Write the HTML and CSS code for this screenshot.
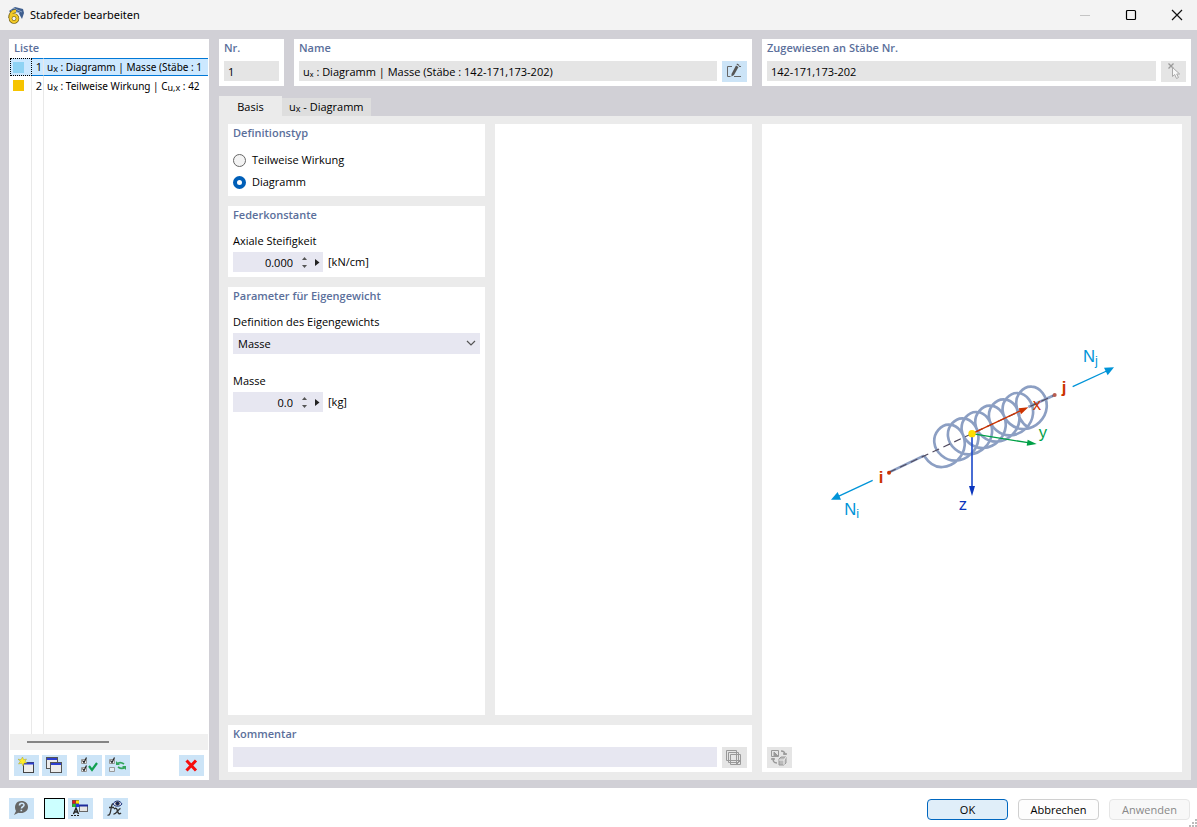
FILE: index.html
```html
<!DOCTYPE html>
<html lang="de">
<head>
<meta charset="utf-8">
<title>Stabfeder bearbeiten</title>
<link rel="stylesheet" href="styles.css">
</head>
<body>
<div class="dialog">
  <header class="titlebar">
    <svg class="app-icon" width="18" height="18" viewBox="0 0 18 18" aria-hidden="true">
      <path d="M2 5 8 1l8 2 1 4-2 6-4-7-7 1z" fill="#3f5f8f"/>
      <path d="M4 4l9 3M6 2l9 4" stroke="#8ea5c6" stroke-width="1"/>
      <path d="M9 5C5 5 3 8 3 12" fill="none" stroke="#6b5a10" stroke-width="3.500"/>
      <circle cx="7" cy="12.500" r="3.500" fill="none" stroke="#6b5a10" stroke-width="3.500"/>
      <path d="M9 5C5 5 3 8 3.500 12" fill="none" stroke="#f2c928" stroke-width="2.300"/>
      <circle cx="7" cy="12.500" r="3.500" fill="none" stroke="#f2c928" stroke-width="2.300"/>
    </svg>
    <h1 class="title">Stabfeder bearbeiten</h1>
    <div class="window-buttons">
      <button class="win-btn" aria-label="Minimieren" disabled><svg width="12" height="12" viewBox="0 0 12 12"><path d="M1 6.500h10" stroke="#c4c4c4"/></svg></button>
      <button class="win-btn" aria-label="Maximieren"><svg width="12" height="12" viewBox="0 0 12 12"><rect x="1.500" y="1.500" width="9" height="9" rx="1" fill="none" stroke="#000" stroke-width="1.200"/></svg></button>
      <button class="win-btn" aria-label="Schließen"><svg width="12" height="12" viewBox="0 0 12 12"><path d="M1 1l10 10M11 1 1 11" stroke="#111" stroke-width="1.200"/></svg></button>
    </div>
  </header>

  <main class="workspace">
    <section class="list-panel">
      <h2 class="heading list-heading">Liste</h2>
      <div class="list-area">
        <table class="list">
          <tbody>
            <tr class="row selected"><td class="c-color"><span class="swatch blue"></span></td><td class="c-num">1</td><td class="c-text">u<sub>x</sub> : Diagramm | Masse (Stäbe : 1</td></tr>
            <tr class="row"><td class="c-color"><span class="swatch gold"></span></td><td class="c-num">2</td><td class="c-text">u<sub>x</sub> : Teilweise Wirkung | C<sub>u,x</sub> : 42</td></tr>
            <tr class="filler"><td class="c-color"></td><td class="c-num"></td><td class="c-text"></td></tr>
          </tbody>
        </table>
      </div>
      <div class="scrollbar"><div class="thumb"></div></div>
      <div class="list-tools">
        <button class="icon-btn" aria-label="Neu"><svg width="19" height="19" viewBox="0 0 19 19"><rect x="6.500" y="6.500" width="10" height="10" fill="#eee" stroke="#444"/><path d="M6 7.500h11" stroke="#2d3fd0" stroke-width="2"/><path d="M5.500 1l1.200 2.700L9.500 3 8 5.300 10 7 7.200 7 6 10 4.700 7.300 1.500 8l1.800-2.700L1 3.200l3 .5z" fill="#ffee28" stroke="#a8a030" stroke-width=".5"/></svg></button>
        <button class="icon-btn" aria-label="Kopieren"><svg width="19" height="19" viewBox="0 0 19 19"><rect x="1.500" y="1.500" width="11" height="11" fill="#ececec" stroke="#555"/><path d="M2 3h10" stroke="#2d3fd0" stroke-width="2"/><rect x="5.500" y="6.500" width="11" height="10" fill="#ececec" stroke="#555"/><path d="M6 8h10" stroke="#2d3fd0" stroke-width="2"/></svg></button>
        <button class="icon-btn gap-before" aria-label="Alle auswählen"><svg width="19" height="19" viewBox="0 0 19 19" fill="none"><path d="M1.500 3.500h5v4h-5zM1.500 11.500h5v4h-5z" fill="#f3f3f3" stroke="#999"/><path d="M2.500 4.500l1.500 2 2.500-5M2.500 12.500l1.500 2 2.500-5" stroke="#222" stroke-width="1.200"/><path d="M9 10l3 4 5-7" stroke="#10a050" stroke-width="2.200"/></svg></button>
        <button class="icon-btn" aria-label="Auswahl umkehren"><svg width="19" height="19" viewBox="0 0 19 19" fill="none"><path d="M1.500 3.500h5v4h-5zM1.500 11.500h5v4h-5z" fill="#e4edf3" stroke="#999"/><path d="M2.500 4.500l1.500 2 2.500-5" stroke="#222" stroke-width="1.200"/><path d="M9 8c2-2 4-2 7 0M17 11c-2 2-4 2-7 0" stroke="#34a55c" stroke-width="1.800"/><path d="M8 5v4h4zM18 14v-4h-4z" fill="#34a55c"/></svg></button>
        <button class="icon-btn push" aria-label="Löschen"><svg width="19" height="19" viewBox="0 0 19 19"><path d="M4.500 4.500l9.500 10M14 4.500l-9.500 10" stroke="#f60d0d" stroke-width="3"/></svg></button>
      </div>
    </section>

    <div class="editor">
      <div class="top-row">
        <div class="top-left">
          <section class="card nr-card">
            <label class="heading" for="nr">Nr.</label>
            <input class="field gray" id="nr" value="1" readonly>
          </section>
          <section class="card name-card">
            <label class="heading" for="name">Name</label>
            <div class="field-row">
              <input class="field gray" id="name" value="uₓ : Diagramm | Masse (Stäbe : 142-171,173-202)" readonly>
              <button class="icon-btn" aria-label="Name bearbeiten"><svg width="19" height="19" viewBox="0 0 19 19"><path d="M7 4.500H2.500v10h3M16 4.500h-2M9 14.500h7" fill="none" stroke="#666"/><path d="M11 3.500l2.500 1.500-4.500 8-2.500 1.500V12z" fill="#555"/><path d="M11.500 2.500 12 1.500l2.500 1.500-.5 1z" fill="#555"/></svg></button>
            </div>
          </section>
        </div>
        <section class="card assigned-card">
          <label class="heading" for="members">Zugewiesen an Stäbe Nr.</label>
          <div class="field-row">
            <input class="field gray" id="members" value="142-171,173-202" readonly>
            <button class="icon-btn off" aria-label="Auswählen" disabled><svg width="19" height="19" viewBox="0 0 19 19"><path d="M4.500 1.500l5 5M9.500 1.500l-5 5" stroke="#999" stroke-width="1.300"/><path d="M8.500 5.500v9l2.200-2 1.800 4 2-1-1.800-3.500h3z" fill="#f8f8f8" stroke="#aaa"/></svg></button>
          </div>
        </section>
      </div>

      <div class="tabs" role="tablist">
        <button class="tab active" role="tab" aria-selected="true">Basis</button>
        <button class="tab" role="tab" aria-selected="false">u<sub>x</sub> - Diagramm</button>
      </div>

      <div class="tab-page" role="tabpanel">
        <div class="left-area">
          <div class="columns">
            <div class="params">
              <section class="card type-card">
                <h2 class="heading">Definitionstyp</h2>
                <div class="radios">
                  <label class="radio"><input type="radio" name="type">Teilweise Wirkung</label>
                  <label class="radio"><input type="radio" name="type" checked>Diagramm</label>
                </div>
              </section>
              <section class="card spring-card">
                <h2 class="heading">Federkonstante</h2>
                <label class="caption" for="stiff">Axiale Steifigkeit</label>
                <div class="value-row">
                  <div class="spin">
                    <input class="field number" id="stiff" value="0.000">
                    <span class="steps"><button class="step" aria-label="Erhöhen"><svg width="5" height="3" viewBox="0 0 5 3"><path d="M0 3 2.500 0 5 3z" fill="#555"/></svg></button><button class="step" aria-label="Verringern"><svg width="5" height="3" viewBox="0 0 5 3"><path d="M0 0 2.500 3 5 0z" fill="#555"/></svg></button></span>
                    <button class="more" aria-label="Weitere"><svg width="5" height="7" viewBox="0 0 5 7"><path d="M0 0 4.500 3.500 0 7z" fill="#222"/></svg></button>
                  </div>
                  <span class="unit">[kN/cm]</span>
                </div>
              </section>
              <section class="card weight-card">
                <h2 class="heading">Parameter für Eigengewicht</h2>
                <label class="caption" for="def">Definition des Eigengewichts</label>
                <div class="select-wrap">
                  <select class="field select" id="def"><option>Masse</option></select>
                  <svg class="chevron" width="10" height="6" viewBox="0 0 10 6" aria-hidden="true"><path d="M1 1l4 4 4-4" fill="none" stroke="#555" stroke-width="1.200"/></svg>
                </div>
                <label class="caption second" for="mass">Masse</label>
                <div class="value-row">
                  <div class="spin">
                    <input class="field number" id="mass" value="0.0">
                    <span class="steps"><button class="step" aria-label="Erhöhen"><svg width="5" height="3" viewBox="0 0 5 3"><path d="M0 3 2.500 0 5 3z" fill="#555"/></svg></button><button class="step" aria-label="Verringern"><svg width="5" height="3" viewBox="0 0 5 3"><path d="M0 0 2.500 3 5 0z" fill="#555"/></svg></button></span>
                    <button class="more" aria-label="Weitere"><svg width="5" height="7" viewBox="0 0 5 7"><path d="M0 0 4.500 3.500 0 7z" fill="#222"/></svg></button>
                  </div>
                  <span class="unit">[kg]</span>
                </div>
              </section>
            </div>
            <section class="card blank"></section>
          </div>
          <section class="card comment-card">
            <label class="heading" for="comment">Kommentar</label>
            <div class="field-row">
              <input class="field" id="comment">
              <button class="icon-btn off" aria-label="Kommentar wählen" disabled><svg width="19" height="19" viewBox="0 0 19 19" fill="#e5e5e5" stroke="#999"><path d="M1.500 2.500h10v10h-10zM3.500 4.500h10v10h-10zM5.500 6.500h10v10h-10z"/><path d="M11.500 16.500v-4h4zM12 16l3-3" fill="none"/></svg></button>
            </div>
          </section>
        </div>

        <section class="card graphic-card">
          <div class="graphic">
            <svg width="310" height="190" viewBox="0 0 930 570" role="img" aria-label="Stabfeder mit Achsen x, y, z">
              <g fill="none" stroke="#8c9fc3" stroke-width="8">
                <path d="M207 412 312 362M625 216 704 180"/>
                <path d="M312 362c14 21 34 36 56 34
                  c33-2 63-31 66-64c3-32-19-62-45-63c-26-2-49 25-46 54c3 29 33 56 66 54
                  c33-2 63-31 66-64c3-32-19-62-45-63c-26-2-49 25-46 54c3 29 33 56 66 54
                  c33-2 63-31 66-64c3-32-19-62-45-63c-26-2-49 25-46 54c3 29 33 56 66 54
                  c33-2 63-31 66-64c3-32-19-62-45-63c-26-2-49 25-46 54c3 29 33 56 66 54
                  c33-2 63-31 66-64c3-32-19-62-45-63c-26-2-49 25-46 54c3 29 33 56 66 54
                  c33-2 63-31 66-64c3-32-19-62-45-63c-26-2-49 25-46 54c3 29 33 56 66 54
                  c33-2 63-31 66-64c3-32-19-62-45-63c-26-2-49 25-46 54c3 33 16 58 38 70"/>
              </g>
              <path d="M207 412 704 180" fill="none" stroke="#514b60" stroke-width="3.500" stroke-dasharray="22 14"/>
              <circle cx="207" cy="413" r="6" fill="#cc3300"/>
              <circle cx="704" cy="180" r="6" fill="#b85c50"/>
              <g stroke-width="4">
                <path d="M456 296 604 226" stroke="#cc3300"/><path d="M625 217 596 220 603 238z" fill="#cc3300"/>
                <path d="M456 296 624 323" stroke="#00a046"/><path d="M650 327 620 332 623 314z" fill="#00a046"/>
                <path d="M456 296V456" stroke="#2450cc" stroke-width="5"/><path d="M456 483 447 453h18z" fill="#0a35bd"/>
                <path d="M158 436 55 484" stroke="#0094d8"/><path d="M33 494 53 471 63 494z" fill="#0094d8"/>
                <path d="M758 155 860 108" stroke="#0094d8"/><path d="M882 97 852 98 863 121z" fill="#0094d8"/>
              </g>
              <circle cx="456" cy="296" r="11" fill="#ffdd00"/>
              <g class="axis-text">
                <text x="638" y="225" fill="#cc3300">x</text>
                <text x="656" y="310" fill="#00a046">y</text>
                <text x="416" y="525" fill="#0a35bd">z</text>
                <text x="73" y="540" fill="#0094d8">N<tspan class="axis-sub" dy="9">i</tspan></text>
                <text x="789" y="80" fill="#0094d8">N<tspan class="axis-sub" dy="10">j</tspan></text>
                <text class="node" x="176" y="444" fill="#cc3300">i</text>
                <text class="node" x="725" y="174" fill="#cc3300">j</text>
              </g>
            </svg>
          </div>
          <div class="graphic-tools">
            <button class="icon-btn off" aria-label="Grafik wechseln" disabled><svg width="19" height="19" viewBox="0 0 19 19" fill="none" stroke="#999"><path d="M1.500 2.500h7v6h-7z"/><path d="M4 4v4h4z" fill="#999"/><path d="M11 3c3 0 4 1 4 4M13 6h4M3 10c0 4 1 5 4 5M1 11h4" stroke-width="1.500"/><path d="M9 11l2-2h5v6l-2 2H9z" fill="#bbb"/><path d="M9 12h5v5M14 12l2-3" stroke="#eee"/></svg></button>
          </div>
        </section>
      </div>
    </div>
  </main>

  <footer class="footer">
    <div class="footer-tools">
      <button class="icon-btn" aria-label="Hilfe"><svg width="19" height="19" viewBox="0 0 19 19"><path d="M9.500 2C13.500 2 16 4.500 16 8s-3 6-7 6c-1 0-2 0-2.500-.3L2 16l2-4C1.500 7 4 2 9.500 2z" fill="#666"/><path d="M7.500 6.500c0-3 4.500-3 4.500-.5 0 2-2.500 1.500-2.500 3.500M9.300 10.700v1.600" fill="none" stroke="#cce4f7" stroke-width="1.600"/></svg></button>
      <button class="color-btn" aria-label="Farbe"></button>
      <button class="icon-btn" aria-label="Darstellung"><svg width="19" height="19" viewBox="0 0 19 19"><path d="M1 1h7v7H1z" fill="#555"/><path d="M1.500 1.500h3v3h-3z" fill="#e21818"/><path d="M5 1.500h3v3H5z" fill="#ffe000"/><path d="M1.500 5h3v3h-3z" fill="#1ec035"/><path d="M5 5h3v3H5z" fill="#2138e0"/><path d="M2.500 15 5 9l2.500 6M3 13h4" fill="none" stroke="#222" stroke-width="1.400"/><path d="M0 16.500h9" stroke="#222" stroke-dasharray="2 1"/><rect x="8.500" y="6.500" width="8" height="6" fill="#e5e5e5" stroke="#666"/><path d="M8 6.500h9" stroke="#1c2b9c" stroke-width="2"/></svg></button>
      <button class="icon-btn gap-before" aria-label="Formel"><svg width="19" height="19" viewBox="0 0 19 19" fill="none" stroke="#333"><path d="M8 5C6 4 5.500 7 5 10s-1 7-3.500 6M3 8.500h5" stroke-width="1.300"/><path d="M8 10c2-2 3 0 3.500 2s1.500 4 3.500 2M14.500 9.500c-2 0-4 6-7 5.500" stroke-width="1.400"/><path d="M7 5c2-4 7-4 9 0-2 3-7 3-9 0z" fill="#dde" stroke="#223a80"/><circle cx="11.500" cy="4.500" r="1.700" fill="#112060"/></svg></button>
    </div>
    <div class="actions">
      <button class="btn primary">OK</button>
      <button class="btn">Abbrechen</button>
      <button class="btn disabled" disabled>Anwenden</button>
    </div>
    <svg class="grip" width="8" height="8" viewBox="0 0 8 8" fill="#bbb" aria-hidden="true"><path d="M6 0h2v2H6zM3 3h2v2H3zM6 3h2v2H6zM0 6h2v2H0zM3 6h2v2H3zM6 6h2v2H6z"/></svg>
  </footer>
</div>
</body>
</html>
```

FILE: styles.css
```css
* { box-sizing: border-box; }
body {
  margin: 0;
  font: 11px/16px "Open Sans", "Noto Sans", sans-serif;
  color: #000;
}
button, input, select { font: inherit; color: inherit; margin: 0; padding: 0; border: 0; border-radius: 0; }
button { background: none; }
svg { display: block; flex: none; }
sub { font-size: 9px; line-height: 1px; vertical-align: -1px; }

.dialog { display: flex; flex-direction: column; height: 100vh; background: #fff; }

.titlebar { display: flex; align-items: center; height: 30px; padding-left: 7px; gap: 5px; background: #f3f3f3; flex: none; }
.title { margin: 0; font-family: "Noto Sans", sans-serif; font-size: 11px; font-weight: 400; }
.window-buttons { display: flex; margin: 0 -3px 0 auto; }
.win-btn { display: grid; place-items: center; width: 46px; height: 30px; }

.workspace { display: flex; flex: 1; min-height: 0; gap: 10px; padding: 9px 6px 8px 9px; background: #d1d0d6; }

.heading { display: block; margin: 0; font-size: 11px; line-height: 16px; font-weight: 600; color: #5b6f9b; }

.list-panel { display: flex; flex-direction: column; width: 200px; flex: none; background: #fff; }
.list-heading { padding: 1px 5px 2px; }
.list-area { flex: 1; min-height: 0; padding: 0 1px; overflow: hidden; }
.list { width: 100%; height: 100%; table-layout: fixed; border-collapse: separate; border-spacing: 0; }
.list td { padding: 0; }
.row { height: 18px; }
.row td { line-height: 16px; white-space: nowrap; overflow: hidden; }
.list .row:not(.selected) td { padding-top: 2px; }
.c-color { width: 22px; border-right: 1px solid #e9e9e9; }
.c-num { width: 12px; border-right: 1px solid #e9e9e9; text-align: right; }
.list .c-num { padding-right: 1px; }
.list .c-text { padding-left: 3px; font-family: "Noto Sans", sans-serif; font-size: 10px; }
.selected td { background: #cce8ff; border-top: 1px solid #0078d7; border-bottom: 1px solid #0078d7; }
.selected .c-color { border: 1px dotted #000; }
.swatch { display: block; width: 11px; height: 11px; margin: -2px 0 0 3px; }
.selected .swatch { margin: 0 0 0 2px; }
.blue { background: #8fd3f4; }
.gold { background: #f6c400; }
.scrollbar { height: 16px; margin: 0 1px; padding: 7px 17px; background: #f0f0f0; }
.thumb { width: 50%; height: 2px; background: #858585; }
.list-tools { display: flex; gap: 3px; padding: 5px; height: 30px; }

.icon-btn { display: grid; place-items: center; width: 25px; height: 21px; background: #cce4f7; flex: none; }
.icon-btn.off { background: #e5e5e5; }
.gap-before { margin-left: 7px; }
.push { margin-left: auto; }

.editor { display: flex; flex-direction: column; flex: 1; min-width: 0; }
.card { background: #fff; padding: 1px 5px 5px; }
.top-row { display: grid; grid-template-columns: 533fr 429fr; gap: 10px; }
.top-left { display: flex; gap: 10px; min-width: 0; }
.top-row .card { height: 47px; }
.top-row .heading { margin-bottom: 5px; }
.nr-card { width: 65px; }
.name-card { flex: 1; min-width: 0; }
.field { display: block; width: 100%; height: 20px; padding: 0 4px; background: #e7e7f1; }
.field.gray { background: #e5e5e5; }
.field-row { display: flex; gap: 5px; }
.field-row .field { flex: 1; min-width: 0; }

.tabs { display: flex; align-items: flex-end; margin-top: 10px; height: 20px; }
.tab { height: 18px; padding: 0 7px; background: #dedede; }
.tab.active { min-width: 63px; height: 20px; padding-top: 2px; background: #ebebeb; }

.tab-page { display: grid; grid-template-columns: 524fr 420fr; gap: 10px; flex: 1; min-height: 0; padding: 8px 9px 8px; background: #ebebeb; }
.left-area { display: flex; flex-direction: column; gap: 10px; min-width: 0; }
.columns { display: grid; grid-template-columns: 1fr 1fr; gap: 10px; flex: 1; }
.params { display: flex; flex-direction: column; gap: 10px; }
.radios { display: flex; flex-direction: column; gap: 6px; padding: 11px 0 1px; }
.radio { display: flex; align-items: center; gap: 6px; }
.radio input { appearance: none; width: 13px; height: 13px; border: 1px solid #666; border-radius: 50%; background: #f3f3f3; }
.radio input:checked { border: 4px solid #005fb8; background: #fff; }
.caption { display: block; margin: 10px 0 3px; }
.caption.second { margin-top: 19px; }
.value-row { display: flex; align-items: center; gap: 5px; }
.spin { display: flex; align-items: center; width: 90px; height: 20px; background: #e7e7f1; }
.number { flex: 1; min-width: 0; padding: 0; text-align: right; background: none; }
.steps { display: flex; flex-direction: column; gap: 5px; margin-left: 9px; }
.step { display: block; }
.more { margin: 0 3px 0 8px; }
.select-wrap { position: relative; }
.select { appearance: none; height: 21px; padding: 0 5px; }
.chevron { position: absolute; right: 4px; top: 7px; pointer-events: none; }
.weight-card { flex: 1; }
.comment-card { padding-bottom: 4px; }
.comment-card .heading { margin-bottom: 5px; }

.graphic-card { display: flex; flex-direction: column; padding-bottom: 4px; min-width: 0; }
.graphic { display: grid; place-items: center; flex: 1; padding: 0 0 12px 6px; }
.axis-text { font: 50px "Liberation Sans", Arial, sans-serif; }
.axis-sub { font-size: 38px; }
.node { font-weight: 700; }

.footer { position: relative; display: flex; align-items: center; height: 39px; padding: 2px 7px 0 9px; flex: none; }
.footer-tools { display: flex; align-items: center; gap: 3px; }
.color-btn { width: 21px; height: 21px; margin-left: 7px; border: 1px solid #000; background: #ccffff; }
.footer-tools .gap-before { margin-left: 7px; }
.actions { display: flex; gap: 10px; margin-left: auto; padding-top: 2px; }
.btn { width: 81px; height: 21px; border: 1px solid #d0d0d0; border-radius: 4px; background: #fdfdfd; }
.primary { border-color: #0067c0; background: #e0eef9; }
.disabled { color: #888; border-color: #e6e6e6; background: #f8f8f8; }
.grip { position: absolute; right: 0; bottom: 0; }
```
